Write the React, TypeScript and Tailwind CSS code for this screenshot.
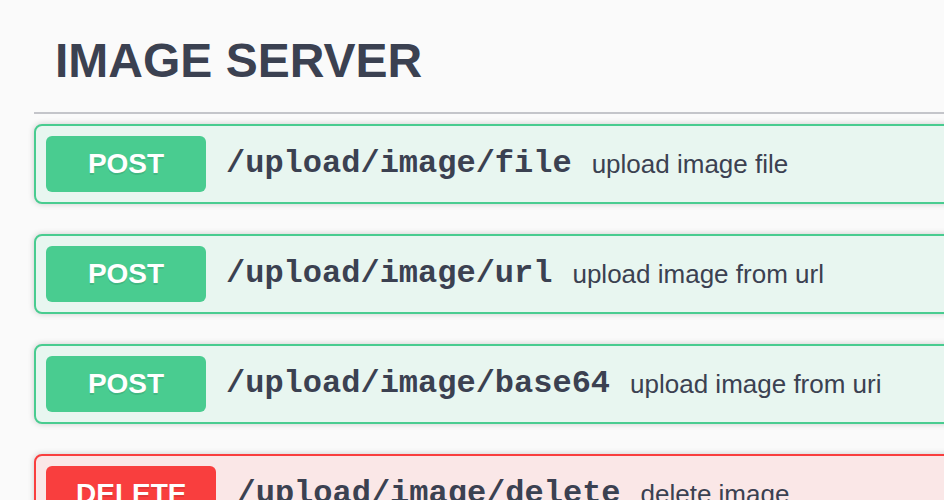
import React from "react";

type Op = { method: "POST" | "DELETE"; path: string; desc: string };

const ops: Op[] = [
  { method: "POST", path: "/upload/image/file", desc: "upload image file" },
  { method: "POST", path: "/upload/image/url", desc: "upload image from url" },
  { method: "POST", path: "/upload/image/base64", desc: "upload image from uri" },
  { method: "DELETE", path: "/upload/image/delete", desc: "delete image" },
];

function Block({ op }: { op: Op }) {
  const isPost = op.method === "POST";
  return (
    <div
      className={
        isPost
          ? "mb-[30px] flex items-center rounded-[8px] border-2 border-[#49cc90] bg-[#e8f6f0] p-[10px] shadow-[0_0_6px_rgba(0,0,0,0.19)]"
          : "mb-[30px] flex items-center rounded-[8px] border-2 border-[#f93e3e] bg-[#fae7e7] p-[10px] shadow-[0_0_6px_rgba(0,0,0,0.19)]"
      }
    >
      <div
        className={
          isPost
            ? "min-w-[160px] rounded-[6px] bg-[#49cc90] px-[30px] py-[12px] text-center font-['Liberation_Sans',Arial,sans-serif] text-[28px] font-bold leading-[32px] text-white [text-shadow:0_2px_0_rgba(0,0,0,0.1)]"
            : "min-w-[160px] rounded-[6px] bg-[#f93e3e] px-[30px] py-[12px] text-center font-['Liberation_Sans',Arial,sans-serif] text-[28px] font-bold leading-[32px] text-white [text-shadow:0_2px_0_rgba(0,0,0,0.1)]"
        }
      >
        {op.method}
      </div>
      <span className="whitespace-nowrap px-[20px] font-['Liberation_Mono','Courier_New',monospace] text-[32px] font-bold text-[#3b4151]">
        {op.path}
      </span>
      <span className="whitespace-nowrap font-['Liberation_Sans',Arial,sans-serif] text-[26px] text-[#3b4151]">
        {op.desc}
      </span>
    </div>
  );
}

export default function App() {
  return (
    <div className="h-[500px] w-[944px] overflow-hidden bg-[#fafafa]">
      <div className="w-[1200px] pl-[34px] pt-[23px]">
        <h3 className="mb-[10px] border-b-2 border-[#c4c5ca] pb-[23px] pl-[21px] pt-[10px] font-['Liberation_Sans',Arial,sans-serif] text-[48px] font-bold leading-[56px] text-[#3b4151]">
          IMAGE SERVER
        </h3>
        {ops.map((op) => (
          <Block key={op.path} op={op} />
        ))}
      </div>
    </div>
  );
}
